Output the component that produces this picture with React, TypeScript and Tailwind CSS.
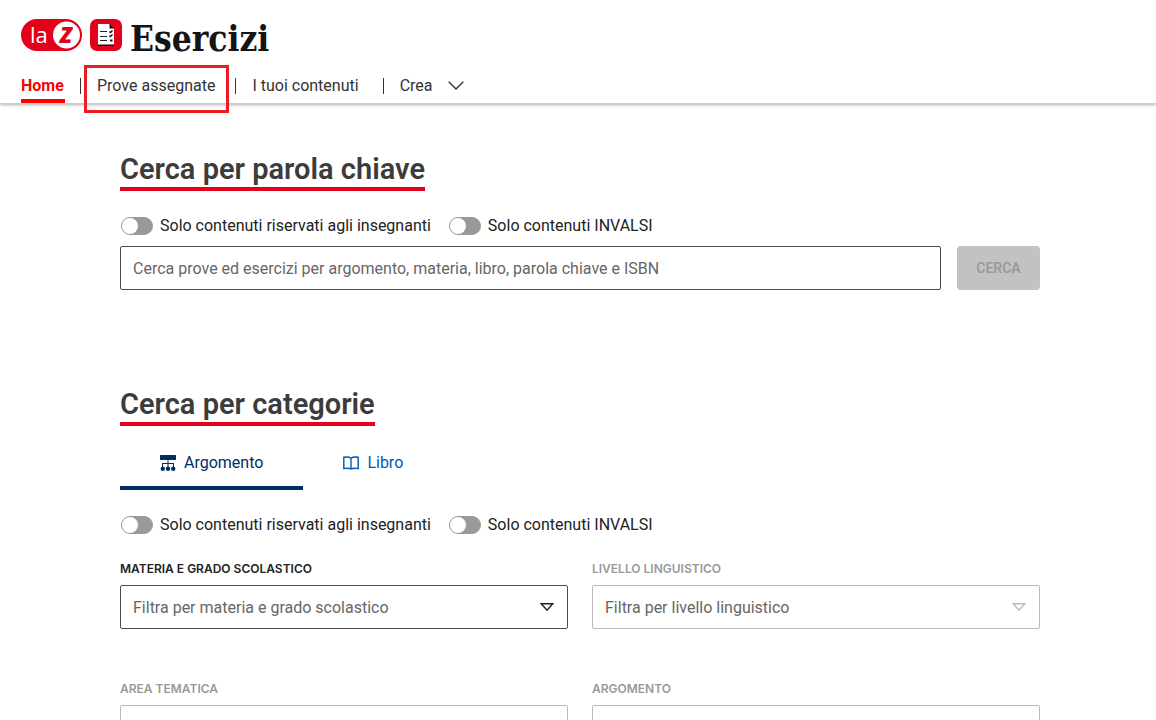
import { useState } from 'react';

const filters = [
    { id: 'materia', label: 'Materia e grado scolastico', placeholder: 'Filtra per materia e grado scolastico', enabled: true },
    { id: 'livello', label: 'Livello linguistico', placeholder: 'Filtra per livello linguistico', enabled: false },
    { id: 'area', label: 'Area tematica', placeholder: 'Filtra per area tematica', enabled: false },
    { id: 'argomento', label: 'Argomento', placeholder: 'Filtra per argomento', enabled: false },
];

function Logo() {
    return (
        <a href="#" aria-label="laZ Esercizi" className="flex items-start gap-2 pt-1">
            <svg width="61" height="32" viewBox="0 0 61 32">
                <rect width="61" height="32" rx="16" fill="#e2001a" />
                <circle cx="45.5" cy="16" r="13.5" fill="#fff" />
                <text x="9" y="24" fill="#fff" fontFamily="Open Sans, sans-serif" fontSize="22">la</text>
                <text x="39" y="24" fill="#e2001a" fontFamily="Open Sans, sans-serif" fontSize="22" fontWeight="800" fontStyle="italic">Z</text>
            </svg>
            <svg width="32" height="32" viewBox="0 0 32 32">
                <rect width="32" height="32" rx="7" fill="#e2001a" />
                <path d="M8 5H19L24 10V26H8Z" fill="#fff" />
                <path d="M19.500 5L24 9.500H19.500ZM8 25.500H24V27H8Z" fill="#111" />
                <path d="M10 12.500H17M10 17.500H17M10 21.500H17" stroke="#222" strokeWidth="1" />
                <path d="M19.500 12.500L20.500 13.500L22.500 11.500M19.500 16.500L20.500 17.500L22.500 15.500" stroke="#111" strokeWidth="1.500" fill="none" />
                <path d="M20 20.500H22.500V22.500H20Z" fill="#111" />
            </svg>
            <span className="pt-0.5 font-['DejaVu_Serif_Condensed','DejaVu_Serif',serif] text-[35px] leading-9 font-bold text-[#141414]">
                Esercizi
            </span>
        </a>
    );
}

function Divider() {
    return <span className="h-4 w-px bg-[#333]" />;
}

function Toggle({ id, label }: { id: string; label: string }) {
    const [on, setOn] = useState(false);
    return (
        <label htmlFor={id} className="flex h-6 cursor-pointer items-center gap-[7px]">
            <input
                id={id}
                type="checkbox"
                role="switch"
                checked={on}
                onChange={() => setOn(!on)}
                className="h-[18px] w-8 shrink-0 cursor-pointer appearance-none rounded-full border border-[#999] bg-[#999] before:block before:size-4 before:rounded-full before:bg-white checked:bg-[#002d62] checked:before:translate-x-[14px]"
            />
            {label}
        </label>
    );
}

function Toggles({ prefix }: { prefix: string }) {
    return (
        <div className="mt-[23px] ml-px flex flex-wrap gap-x-[18px]">
            <Toggle id={`${prefix}-insegnanti`} label="Solo contenuti riservati agli insegnanti" />
            <Toggle id={`${prefix}-invalsi`} label="Solo contenuti INVALSI" />
        </div>
    );
}

function SectionTitle({ children }: { children: string }) {
    return (
        <h2 className="w-fit border-b-4 border-[#e2001a] pt-0.5 text-[29px] leading-9 font-semibold text-[#3c3c3c]">
            {children}
        </h2>
    );
}

function FilterSelect({ filter }: { filter: (typeof filters)[number] }) {
    return (
        <div className="flex flex-col gap-2">
            <label
                htmlFor={filter.id}
                className={`font-[Inter,sans-serif] text-xs font-semibold uppercase ${filter.enabled ? 'text-[#222]' : 'text-[#999]'}`}
            >
                {filter.label}
            </label>
            <div className="relative">
                <select
                    id={filter.id}
                    disabled={!filter.enabled}
                    defaultValue=""
                    className="h-11 w-full appearance-none rounded-xs border border-[#4d4d4d] bg-white px-3 pt-0.5 text-[#666] disabled:border-[#bbb] disabled:opacity-100"
                >
                    <option value="">{filter.placeholder}</option>
                </select>
                <svg
                    width="14"
                    height="8"
                    viewBox="0 0 14 8"
                    className={`pointer-events-none absolute top-[18px] right-3.5 ${filter.enabled ? 'text-[#222]' : 'text-[#bbb]'}`}
                >
                    <path d="M1.2 0.8H12.8L7 7.2Z" fill="none" stroke="currentColor" strokeWidth="1.4" />
                </svg>
            </div>
        </div>
    );
}

export default function App() {
    const [tab, setTab] = useState('argomento');
    const tabClass = (name: string) =>
        `flex h-[50px] items-center gap-2 border-b-4 px-10 ${tab === name ? 'border-[#002d62] text-[#002d62]' : 'border-transparent text-[#0058b8]'}`;

    return (
        <div className="min-h-screen bg-white font-[Roboto,sans-serif] text-base text-[#222]">
            <header className="border-b border-[#ccc] px-[21px] pt-[15px] shadow-[0_1px_3px_rgba(0,0,0,0.3)]">
                <Logo />
                <nav className="mt-2.5 flex h-9 items-start text-[#333]">
                    <a href="#" className="flex h-9 min-w-11 items-start border-b-4 border-[#f00] pt-[7px] font-bold text-[#f00]">Home</a>
                    <div className="ml-[15px] flex h-9 items-center pt-px">
                        <Divider />
                        <a href="#" className="relative pr-5 pl-4">
                            Prove assegnate
                            <span className="pointer-events-none absolute -top-[9px] right-1.5 left-[3px] h-12 border-3 border-[#ed1c24]" />
                        </a>
                        <Divider />
                        <a href="#" className="pr-6 pl-4">I tuoi contenuti</a>
                        <Divider />
                        <button type="button" className="flex items-center gap-[15px] pl-4">
                            Crea
                            <svg width="16" height="9" viewBox="0 0 16 9" fill="none" stroke="currentColor" strokeWidth="1.4">
                                <path d="M0.7 0.7L8 8L15.3 0.7" />
                            </svg>
                        </button>
                    </div>
                </nav>
            </header>

            <main className="pt-[45px] pr-[116px] pb-16 pl-[120px]">
                <section>
                    <SectionTitle>Cerca per parola chiave</SectionTitle>
                    <Toggles prefix="search" />
                    <form className="mt-2 flex gap-4" onSubmit={(e) => e.preventDefault()}>
                        <input
                            type="text"
                            aria-label="Cerca prove ed esercizi"
                            placeholder="Cerca prove ed esercizi per argomento, materia, libro, parola chiave e ISBN"
                            className="h-11 min-w-0 flex-1 rounded-xs border border-[#4d4d4d] px-3 placeholder:text-[#666]"
                        />
                        <button type="submit" disabled className="w-[83px] rounded bg-[#c2c2c2] text-sm font-semibold text-[#999]">
                            CERCA
                        </button>
                    </form>
                </section>

                <section className="mt-[94px]">
                    <SectionTitle>Cerca per categorie</SectionTitle>
                    <div role="tablist" className="mt-3.5 flex">
                        <button type="button" role="tab" aria-selected={tab === 'argomento'} onClick={() => setTab('argomento')} className={tabClass('argomento')}>
                            <svg width="16" height="16" viewBox="0 0 16 16" fill="currentColor">
                                <rect width="16" height="5" rx="0.6" />
                                <path d="M7.5 5H8.5V8H14V12H13V9H8.5V12H7.5V9H3V12H2V8H7.5Z" />
                                <circle cx="2.8" cy="13.7" r="2.2" />
                                <circle cx="8" cy="13.7" r="2.2" />
                                <circle cx="13.2" cy="13.7" r="2.2" />
                            </svg>
                            Argomento
                        </button>
                        <button type="button" role="tab" aria-selected={tab === 'libro'} onClick={() => setTab('libro')} className={tabClass('libro')}>
                            <svg width="16" height="14" viewBox="0 0 16 14" fill="none" stroke="currentColor" strokeWidth="1.4">
                                <path d="M8 2.2C6.5 1 4 0.8 0.8 1.2V12.6C4 12 6.5 12.2 8 13C9.5 12.2 12 12 15.2 12.6V1.2C12 0.8 9.5 1 8 2.2V13" />
                            </svg>
                            Libro
                        </button>
                    </div>
                    <Toggles prefix="category" />
                    <div className="mt-6 grid grid-cols-2 gap-x-6 gap-y-[52px]">
                        {filters.map((filter) => (
                            <FilterSelect key={filter.id} filter={filter} />
                        ))}
                    </div>
                </section>
            </main>
        </div>
    );
}
